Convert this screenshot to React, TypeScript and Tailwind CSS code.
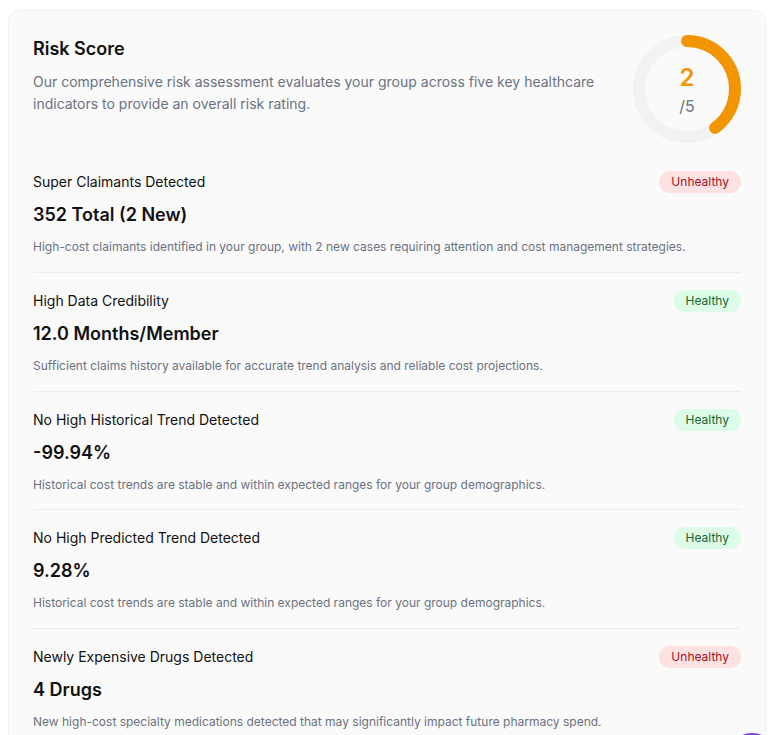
import React from 'react'

type Status = 'Healthy' | 'Unhealthy'

const INDICATORS: { title: string; value: string; desc: string; status: Status }[] = [
  {
    title: 'Super Claimants Detected',
    value: '352 Total (2 New)',
    desc: 'High-cost claimants identified in your group, with 2 new cases requiring attention and cost management strategies.',
    status: 'Unhealthy',
  },
  {
    title: 'High Data Credibility',
    value: '12.0 Months/Member',
    desc: 'Sufficient claims history available for accurate trend analysis and reliable cost projections.',
    status: 'Healthy',
  },
  {
    title: 'No High Historical Trend Detected',
    value: '-99.94%',
    desc: 'Historical cost trends are stable and within expected ranges for your group demographics.',
    status: 'Healthy',
  },
  {
    title: 'No High Predicted Trend Detected',
    value: '9.28%',
    desc: 'Historical cost trends are stable and within expected ranges for your group demographics.',
    status: 'Healthy',
  },
  {
    title: 'Newly Expensive Drugs Detected',
    value: '4 Drugs',
    desc: 'New high-cost specialty medications detected that may significantly impact future pharmacy spend.',
    status: 'Unhealthy',
  },
]

const SCORE = 2
const MAX_SCORE = 5
const R = 48
const CIRC = 2 * Math.PI * R

function ScoreGauge() {
  const filled = (SCORE / MAX_SCORE) * CIRC
  return (
    <div className="relative w-[108px] h-[108px] shrink-0">
      <svg width={108} height={108} viewBox="0 0 108 108" className="absolute inset-0">
        <circle cx={54} cy={54} r={R} fill="none" stroke="#f2f2f2" strokeWidth={12} />
        <circle
          cx={54}
          cy={54}
          r={R}
          fill="none"
          stroke="#f39500"
          strokeWidth={12}
          strokeLinecap="round"
          strokeDasharray={`${filled} ${CIRC}`}
          transform="rotate(-90 54 54)"
        />
      </svg>
      <div className="absolute inset-0 flex flex-col items-center justify-center pt-[1px]">
        <span className="text-2xl leading-8 font-semibold text-[#f39500]">{SCORE}</span>
        <span className="text-base leading-6 text-[#6b7280]">/{MAX_SCORE}</span>
      </div>
    </div>
  )
}

function Badge({ status }: { status: Status }) {
  const healthy = status === 'Healthy'
  return (
    <span
      className={
        healthy
          ? 'inline-flex items-center h-[22px] px-3 rounded-full text-xs bg-[#dcfce7] text-[#166534]'
          : 'inline-flex items-center h-[22px] px-3 rounded-full text-xs bg-[#fee2e2] text-[#a1121f]'
      }
    >
      {status}
    </span>
  )
}

export default function App() {
  return (
    <div className="relative min-h-screen bg-white pt-[10px] pl-2 pr-[10px] font-['Inter','Liberation_Sans',sans-serif]">
      <div className="rounded-xl border border-[#f0f0f0] bg-[#fafafa] px-6 pt-6 pb-4">
        {/* Header */}
        <div className="flex gap-6 mb-[11px]">
          <div className="flex-1">
            <h2 className="text-lg leading-7 font-semibold text-[#111111]">Risk Score</h2>
            <p className="mt-2 text-sm leading-[22px] text-[#6b7280]">
              Our comprehensive risk assessment evaluates your group across five key healthcare indicators to provide an overall risk rating.
            </p>
          </div>
          <ScoreGauge />
        </div>

        {/* Indicators */}
        <div className="flex flex-col">
          {INDICATORS.map((item, i) => (
            <div
              key={item.title}
              className={i === 0 ? 'pt-4 pb-[16.75px]' : 'pt-4 pb-[16.75px] border-t border-[#ebebeb]'}
            >
              <div className="flex items-center justify-between h-6">
                <span className="text-sm text-[#111111]">{item.title}</span>
                <Badge status={item.status} />
              </div>
              <div className="mt-[7px] text-lg leading-7 font-semibold text-[#111111]">{item.value}</div>
              <p className="mt-[10px] text-xs leading-4 text-[#6b7280]">{item.desc}</p>
            </div>
          ))}
        </div>
      </div>

      {/* floating chat button, mostly below the fold */}
      <div className="absolute top-[733px] left-[726px] w-[52px] h-[52px] rounded-full bg-[#7c3aed]" />
    </div>
  )
}
